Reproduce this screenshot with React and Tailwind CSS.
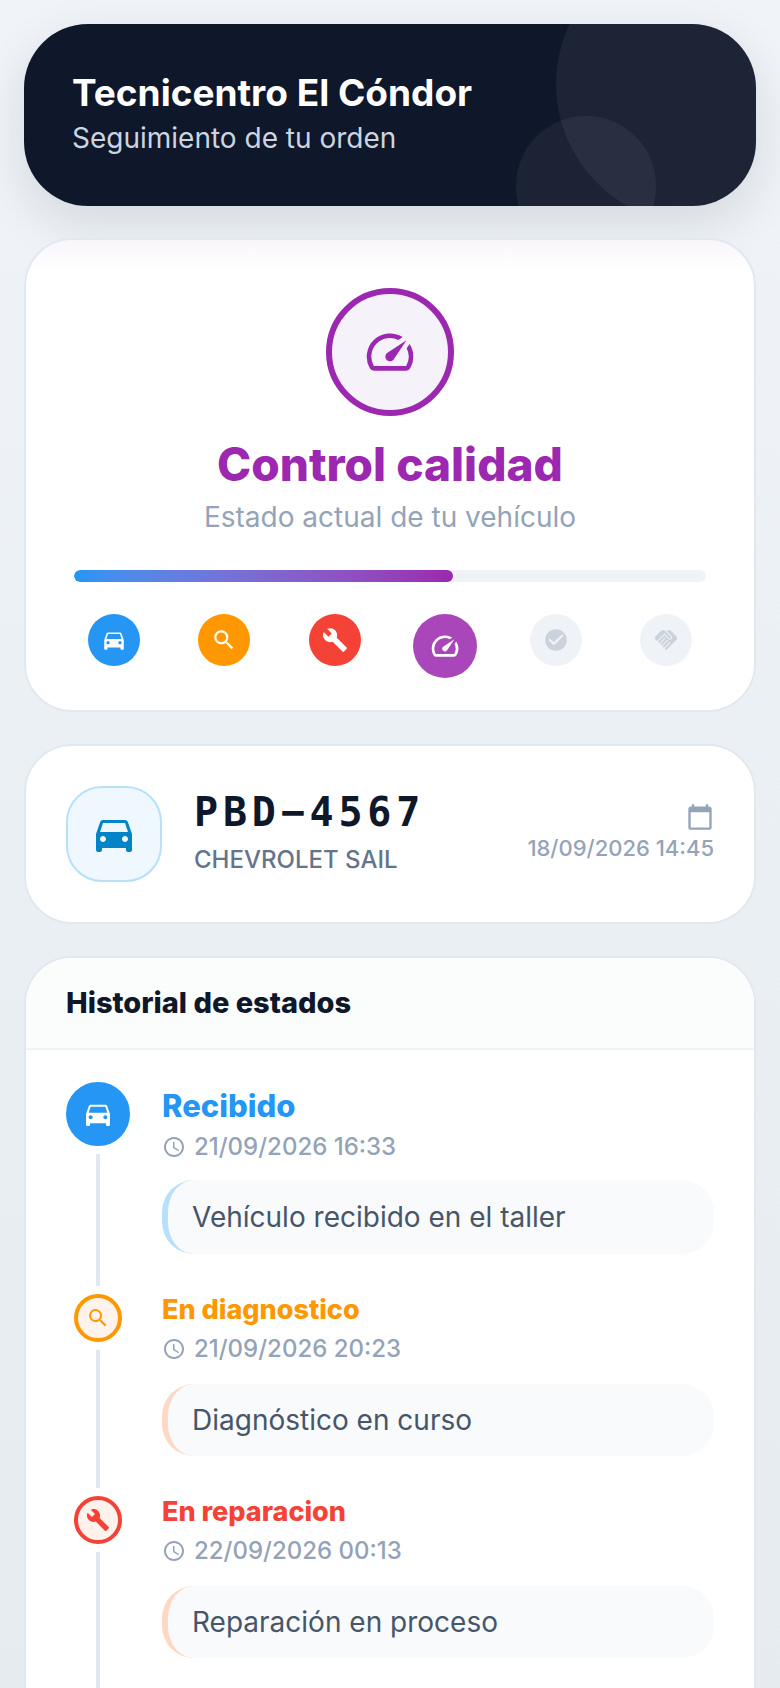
import {
  MdAccessTime,
  MdBuild,
  MdCalendarToday,
  MdCheckCircle,
  MdDirectionsCar,
  MdHandshake,
  MdSearch,
  MdSpeed,
} from "react-icons/md";

const steps = [
  { label: "Recibido", Icon: MdDirectionsCar, tone: "bg-[#2596f3] text-white" },
  { label: "En diagnostico", Icon: MdSearch, tone: "bg-[#ff9800] text-white" },
  { label: "En reparacion", Icon: MdBuild, tone: "bg-[#f44336] text-white" },
  { label: "Control calidad", Icon: MdSpeed, tone: "bg-[#a947ba] text-white", current: true },
  { label: "Listo", Icon: MdCheckCircle, tone: "bg-[#eff3f8] text-[#cbd2db]" },
  { label: "Entregado", Icon: MdHandshake, tone: "bg-[#eff3f8] text-[#cbd2db]" },
];

const history = [
  {
    title: "Recibido",
    date: "21/09/2026 16:33",
    note: "Vehículo recibido en el taller",
    Icon: MdDirectionsCar,
    dot: "bg-[#2596f3] border-[#2596f3] text-white",
    text: "text-[#2596f3]",
    edge: "border-[#b9e0fb]",
    large: true,
  },
  {
    title: "En diagnostico",
    date: "21/09/2026 20:23",
    note: "Diagnóstico en curso",
    Icon: MdSearch,
    dot: "bg-[#fff3ec] border-[#ff9800] text-[#ff9800]",
    text: "text-[#ff9800]",
    edge: "border-[#fdd8c4]",
  },
  {
    title: "En reparacion",
    date: "22/09/2026 00:13",
    note: "Reparación en proceso",
    Icon: MdBuild,
    dot: "bg-[#fff1eb] border-[#f44336] text-[#f44336]",
    text: "text-[#f44336]",
    edge: "border-[#fdd8c4]",
  },
];

function Banner() {
  return (
    <header className="relative overflow-hidden rounded-[64px] bg-[#0f172a] px-12 py-12">
      <span className="absolute -top-20 -right-20 size-[280px] rounded-full bg-white/[0.06]" />
      <span className="absolute right-[100px] -bottom-[50px] size-[140px] rounded-full bg-white/5" />
      <h1 className="text-[37px] leading-[42px] font-bold text-white">Tecnicentro El Cóndor</h1>
      <p className="mt-1 text-[28px] leading-[40px] text-[#cbd5e1]">Seguimiento de tu orden</p>
    </header>
  );
}

function CurrentStatus() {
  return (
    <section className="rounded-[48px] border-2 border-[#e2e8f0] bg-white bg-linear-to-b from-[#f9f6fb] to-white to-[32px] px-12 pt-12 pb-8">
      <div className="mx-auto flex size-32 items-center justify-center rounded-full border-6 border-[#9c27b0] bg-[#f5f2fa] text-[#9c27b0]">
        <MdSpeed size={56} />
      </div>
      <h2 className="mt-5 text-center text-[46px] leading-[56px] font-extrabold text-[#9c27b0]">Control calidad</h2>
      <p className="mt-1 text-center text-[28px] leading-[42px] text-[#94a3b8]">Estado actual de tu vehículo</p>
      <div
        role="progressbar"
        aria-label="Avance de la orden"
        aria-valuenow={60}
        aria-valuemin={0}
        aria-valuemax={100}
        className="mt-8 h-3 overflow-hidden rounded-full bg-[#eff3f8]"
      >
        <div className="h-full w-3/5 rounded-full bg-linear-to-r from-[#2196f3] to-[#9c27b0]" />
      </div>
      <ol className="mt-8 flex items-start justify-between">
        {steps.map(({ label, Icon, tone, current }) => (
          <li key={label} aria-label={label} className="flex w-20 justify-center">
            <span
              className={`flex items-center justify-center rounded-full ${current ? "size-16" : "size-[52px]"} ${tone}`}
            >
              <Icon size={current ? 32 : 26} />
            </span>
          </li>
        ))}
      </ol>
    </section>
  );
}

function Vehicle() {
  return (
    <section className="flex items-center gap-8 rounded-[48px] border-2 border-[#e2e8f0] bg-white p-10">
      <div className="flex size-24 shrink-0 items-center justify-center rounded-[36px] border-2 border-[#b9e0fb] bg-[#f0f8ff] text-[#0284c7]">
        <MdDirectionsCar size={48} />
      </div>
      <div className="flex-1">
        <p className="font-['DejaVu_Sans_Mono',monospace] text-[40px] leading-[48px] font-bold tracking-[0.12em] text-[#0f172a]">
          PBD−4567
        </p>
        <p className="mt-1 text-[24px] leading-[40px] font-medium text-[#64748b]">CHEVROLET SAIL</p>
      </div>
      <div className="flex flex-col items-end text-[#94a3b8]">
        <MdCalendarToday size={28} />
        <time className="text-[22px] leading-[34px] font-medium">18/09/2026 14:45</time>
      </div>
    </section>
  );
}

function HistoryItem({ title, date, note, Icon, dot, text, edge, large }) {
  return (
    <li className="flex gap-8">
      <div className="flex w-16 shrink-0 flex-col items-center gap-2 pb-2">
        <span
          className={`flex shrink-0 items-center justify-center rounded-full border-4 ${large ? "size-16" : "size-12"} ${dot}`}
        >
          <Icon size={large ? 32 : 24} />
        </span>
        <span className="w-1 flex-1 bg-[#e2e8f0]" />
      </div>
      <div className={`flex-1 pb-10 ${large ? "pt-1" : ""}`}>
        <h3
          className={`font-extrabold ${large ? "text-[31px] leading-[40px]" : "text-[27px] leading-[32px]"} ${text}`}
        >
          {title}
        </h3>
        <p
          className={`flex items-center gap-2 text-[24px] font-medium text-[#94a3b8] ${large ? "leading-[42px]" : "leading-[46px]"}`}
        >
          <MdAccessTime size={24} />
          <time>{date}</time>
        </p>
        <p
          className={`mt-3 rounded-[32px] border-l-6 bg-[#f8fafc] px-6 py-4 text-[28px] text-[#475569] ${large ? "leading-[42px]" : "leading-[40px]"} ${edge}`}
        >
          {note}
        </p>
      </div>
    </li>
  );
}

function History() {
  return (
    <section className="overflow-hidden rounded-[48px] border-2 border-[#e2e8f0] bg-white">
      <h2 className="border-b-2 border-[#eff3f8] bg-[#fbfcfc] px-10 py-6 text-[29px] leading-[42px] font-extrabold text-[#0f172a]">
        Historial de estados
      </h2>
      <ol className="px-10 py-8">
        {history.map((item) => (
          <HistoryItem key={item.title} {...item} />
        ))}
      </ol>
    </section>
  );
}

export default function App() {
  return (
    <main className="flex min-h-screen flex-col gap-8 bg-linear-to-b from-[#f0f4f8] via-[#eaeff3] to-[#e6ebef] p-6 font-['Inter',sans-serif]">
      <div className="rounded-[64px] shadow-[0_16px_48px_rgba(15,23,42,0.12)]">
        <Banner />
      </div>
      <CurrentStatus />
      <Vehicle />
      <History />
    </main>
  );
}
